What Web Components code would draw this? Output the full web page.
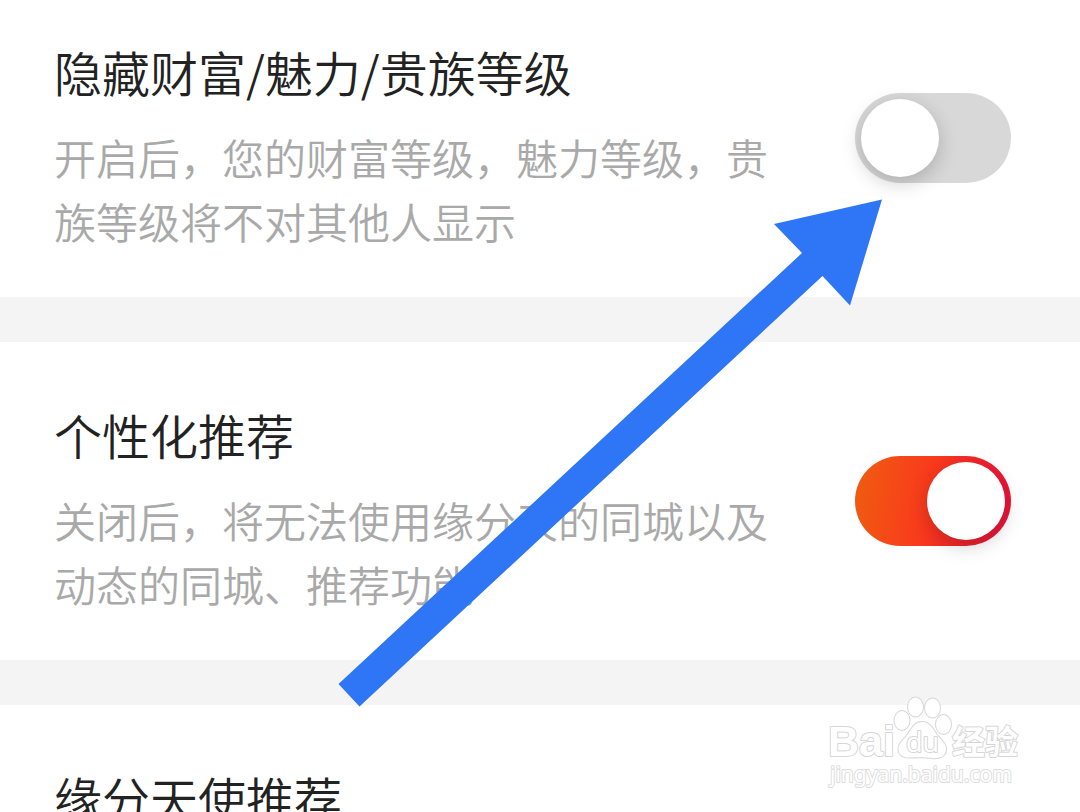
<!DOCTYPE html>
<html lang="zh-CN">
<head>
<meta charset="utf-8">
<meta name="viewport" content="width=device-width, initial-scale=1">
<title>隐私设置</title>
<style>
body { margin: 0; background: #fff; font-family: "Noto Sans CJK SC", sans-serif; }
</style>
</head>
<body>
<settings-page>
  <setting-row label="隐藏财富/魅力/贵族等级">开启后，您的财富等级，魅力等级，贵族等级将不对其他人显示</setting-row>
  <setting-row label="个性化推荐" checked>关闭后，将无法使用缘分天的同城以及动态的同城、推荐功能</setting-row>
  <setting-row label="缘分天使推荐" checked></setting-row>
  <pointer-arrow slot="overlay"></pointer-arrow>
  <site-watermark slot="overlay"></site-watermark>
</settings-page>
<script>
const attach = (el, html) => {
  const t = document.createElement('template');
  t.innerHTML = html;
  el.attachShadow({ mode: 'open' }).append(t.content.cloneNode(true));
  return el.shadowRoot;
};

customElements.define('toggle-switch', class extends HTMLElement {
  constructor() {
    super();
    attach(this, `
      <style>
        :host { display: block; flex: none; }
        input {
          appearance: none; display: flex; align-items: center; box-sizing: border-box;
          width: 156px; height: 90px; margin: 0; padding: 6px;
          border-radius: 45px; background: #d8d8d8; cursor: pointer;
        }
        input::before {
          content: ""; width: 78px; height: 78px; border-radius: 50%;
          background: #fff; box-shadow: 0 6px 20px rgba(0, 0, 0, .2);
        }
        input:checked {
          justify-content: flex-end;
          background: linear-gradient(100deg, #f05a10 5%, #fa371e 50%, #ea1638 90%);
        }
      </style>
      <input type="checkbox" role="switch">`);
  }
  connectedCallback() {
    const input = this.shadowRoot.querySelector('input');
    input.checked = this.hasAttribute('checked');
    input.setAttribute('aria-label', this.getAttribute('label') || '');
  }
});

customElements.define('setting-row', class extends HTMLElement {
  connectedCallback() {
    if (this.shadowRoot) return;
    const root = attach(this, `
      <style>
        :host { display: flex; align-items: center; gap: 60px; box-sizing: border-box;
          min-height: 318px; padding-right: 69px; background: #fff; }
        .copy { flex: 1; min-width: 0; align-self: flex-start; padding: 57px 0 40px 54px; }
        h2 { margin: 0 0 19px; font-size: 48px; line-height: 70px; font-weight: 350; color: #222; }
        p { margin: 0; font-size: 42px; line-height: 64px; font-weight: 350; color: #a9a9a9; }
      </style>
      <div class="copy"><h2></h2><p><slot></slot></p></div>
      <toggle-switch></toggle-switch>`);
    const label = this.getAttribute('label');
    root.querySelector('h2').textContent = label;
    const sw = root.querySelector('toggle-switch');
    sw.toggleAttribute('checked', this.hasAttribute('checked'));
    sw.shadowRoot.querySelector('input').checked = this.hasAttribute('checked');
    sw.shadowRoot.querySelector('input').setAttribute('aria-label', label);
  }
});

customElements.define('pointer-arrow', class extends HTMLElement {
  constructor() {
    super();
    attach(this, `
      <style>
        :host { display: block; position: absolute; right: 198px; top: 199px; pointer-events: none; }
        svg { display: block; }
      </style>
      <svg width="544" height="508" viewBox="338 199 544 508" aria-hidden="true">
        <path fill="#2f76f6" d="M882 199.500L774 224L802 253L338.500 684L359.500 706.500L822.500 276L850 305.500Z"/>
      </svg>`);
  }
});

customElements.define('site-watermark', class extends HTMLElement {
  constructor() {
    super();
    attach(this, `
      <style>
        :host { display: block; position: absolute; right: 55px; bottom: 20px; pointer-events: none; }
        svg { display: block; }
        text, path, ellipse { fill: #fff; stroke: #d6d6d6; stroke-width: 2px; paint-order: stroke; stroke-linejoin: round; }
        .brand { font: bold 43px "Liberation Sans", sans-serif; }
        .du { font: 500 27px "Open Sans", sans-serif; }
        .cn { font: 700 33px "Noto Sans CJK SC", sans-serif; }
        .url { font: 21px "Noto Sans", sans-serif; stroke: #dedede; }
      </style>
      <svg width="200" height="100" viewBox="825 692 200 100">
        <text class="brand" x="828" y="756">Bai</text>
        <ellipse cx="902" cy="720.500" rx="7.500" ry="9.500"/>
        <ellipse cx="915.500" cy="707" rx="7.500" ry="9.500"/>
        <ellipse cx="932.500" cy="708" rx="7.500" ry="9.500"/>
        <ellipse cx="943.500" cy="724.500" rx="7.500" ry="9.500"/>
        <path d="M922 722C913 722 911 731 905 738C901 742 898 745 898.500 750C899 756 905 758 911 757.500C918 757 926 757 932 758C940 759 946 756 946 749C946 743 941 740 937 735C933 729 930 722 922 722Z"/>
        <text class="du" x="906" y="752">du</text>
        <text class="cn" x="952" y="754">经验</text>
        <text class="url" x="830" y="782">jingyan.baidu.com</text>
      </svg>`);
  }
});

customElements.define('settings-page', class extends HTMLElement {
  constructor() {
    super();
    attach(this, `
      <style>
        :host { display: block; position: relative; height: 100vh; overflow: hidden; background: #fff; }
        main { display: grid; gap: 45px; margin-top: -21px; background: #f4f4f4; }
      </style>
      <main><slot></slot></main>
      <slot name="overlay"></slot>`);
  }
});
</script>
</body>
</html>
